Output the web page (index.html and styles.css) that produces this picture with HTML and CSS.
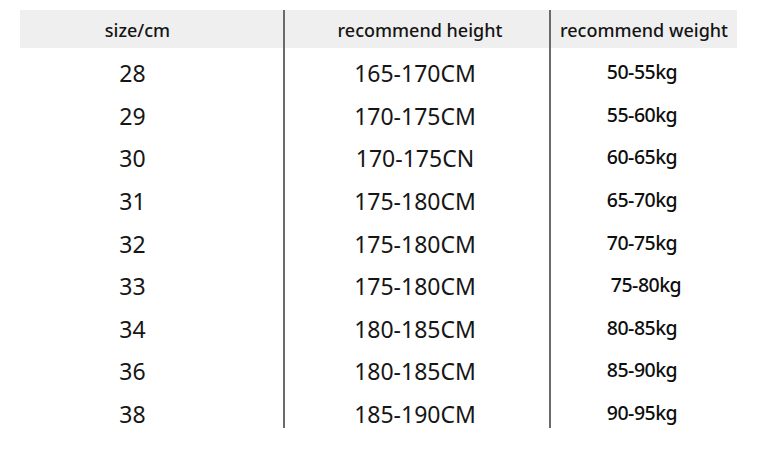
FILE: index.html
```html
<!DOCTYPE html>
<html>
<head>
<meta charset="utf-8">
<link rel="stylesheet" href="styles.css">
</head>
<body>
<div class="table">
  <div class="col col-size">
    <div class="head">size/cm</div>
    <div class="cells">
      <div class="cell">28</div>
      <div class="cell">29</div>
      <div class="cell">30</div>
      <div class="cell">31</div>
      <div class="cell">32</div>
      <div class="cell">33</div>
      <div class="cell">34</div>
      <div class="cell">36</div>
      <div class="cell">38</div>
    </div>
  </div>
  <div class="col col-height">
    <div class="head">recommend height</div>
    <div class="cells">
      <div class="cell">165-170CM</div>
      <div class="cell">170-175CM</div>
      <div class="cell">170-175CN</div>
      <div class="cell">175-180CM</div>
      <div class="cell">175-180CM</div>
      <div class="cell">175-180CM</div>
      <div class="cell">180-185CM</div>
      <div class="cell">180-185CM</div>
      <div class="cell">185-190CM</div>
    </div>
  </div>
  <div class="col col-weight">
    <div class="head">recommend weight</div>
    <div class="cells">
      <div class="cell">50-55kg</div>
      <div class="cell">55-60kg</div>
      <div class="cell">60-65kg</div>
      <div class="cell">65-70kg</div>
      <div class="cell">70-75kg</div>
      <div class="cell shift">75-80kg</div>
      <div class="cell">80-85kg</div>
      <div class="cell">85-90kg</div>
      <div class="cell">90-95kg</div>
    </div>
  </div>
</div>
</body>
</html>
```
FILE: styles.css
```css
html, body {
  margin: 0;
  padding: 0;
  background: #ffffff;
}
body {
  font-family: "Noto Sans", "Open Sans", sans-serif;
  color: #161616;
}
.table {
  display: flex;
  margin: 10px 0 0 20px;
  width: 717px;
}
.col {
  display: flex;
  flex-direction: column;
  height: 418px;
}
.col-size {
  width: 263px;
}
.col-height {
  width: 264px;
  border-left: 2px solid #6a6a6a;
  border-right: 2px solid #6a6a6a;
}
.col-weight {
  width: 186px;
}
.head {
  flex-shrink: 0;
  height: 38px;
  background: #efefef;
  display: flex;
  align-items: center;
  justify-content: center;
  font-size: 18px;
  font-weight: 500;
  color: #141414;
  padding-top: 2px;
  box-sizing: border-box;
}
.cells {
  flex-shrink: 0;
  padding-top: 4px;
}
.cell {
  box-sizing: border-box;
  height: 42.6px;
  display: flex;
  align-items: center;
  justify-content: center;
  font-size: 23px;
}
.col-size .head {
  padding-right: 28px;
}
.col-size .cell {
  padding-right: 38px;
}
.col-height .head {
  padding-left: 6px;
}
.col-height .cell {
  padding-right: 4px;
}
.col-weight .cell {
  font-weight: 500;
  font-size: 19.5px;
  letter-spacing: -0.5px;
  padding-right: 4px;
  padding-bottom: 3px;
  color: #0e0e0e;
}
.col-weight .shift {
  padding-left: 8px;
}
```
